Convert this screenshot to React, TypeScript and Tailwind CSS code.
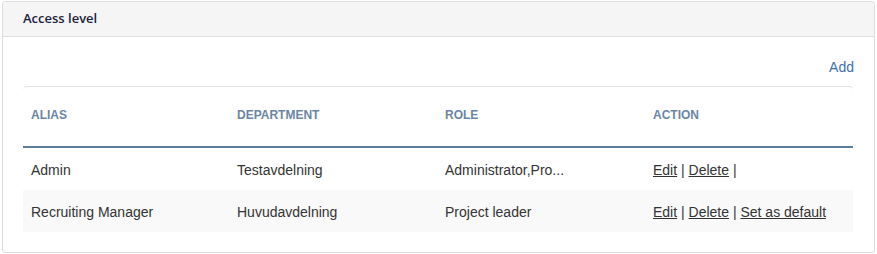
import React from "react";

const rows = [
  { alias: "Admin", dept: "Testavdelning", role: "Administrator,Pro...", def: false },
  { alias: "Recruiting Manager", dept: "Huvudavdelning", role: "Project leader", def: true },
];

export default function App() {
  return (
    <div className="w-[877px] h-[254px] bg-white pt-[1px] px-[2px] font-['Liberation_Sans',Arial,sans-serif]">
      <div className="border border-[#dddddd] rounded-[3px] h-[252px] overflow-hidden">
        <div className="h-[35px] bg-[#f5f5f5] border-b border-[#dddddd] px-[20px] flex items-center">
          <h3 className="text-[13px] font-['Open_Sans',sans-serif] text-[#1c1c3c] font-semibold">Access level</h3>
        </div>
        <div className="px-[20px] pt-[21px]">
          <div className="flex justify-end h-[28px]">
            <a className="text-[14px] text-[#3d6fa8] leading-[18px]">Add</a>
          </div>
          <table className="w-[830px] border-t border-[#e2e2e2] rounded-t-[4px] border-separate border-spacing-0 table-fixed">
            <colgroup>
              <col className="w-[206px]" />
              <col className="w-[208px]" />
              <col className="w-[208px]" />
              <col className="w-[208px]" />
            </colgroup>
            <thead>
              <tr className="h-[61px]">
                {["ALIAS", "DEPARTMENT", "ROLE", "ACTION"].map((h) => (
                  <th
                    key={h}
                    className="text-left px-[8px] text-[12px] font-bold text-[#6a86a4] border-b-2 border-[#5b7d9a] align-middle pb-[3px]"
                  >
                    {h}
                  </th>
                ))}
              </tr>
            </thead>
            <tbody>
              {rows.map((r, i) => (
                <tr key={r.alias} className={i % 2 ? "h-[42px] bg-[#f9f9f9]" : "h-[42px]"}>
                  <td className="px-[8px] text-[14px] text-[#333] pt-[2px]">{r.alias}</td>
                  <td className="px-[8px] text-[14px] text-[#333] pt-[2px]">{r.dept}</td>
                  <td className="px-[8px] text-[14px] text-[#333] pt-[2px]">{r.role}</td>
                  <td className="px-[8px] text-[14px] text-[#333] pt-[2px]">
                    <a className="underline">Edit</a> | <a className="underline">Delete</a> |
                    {r.def && (
                      <>
                        {" "}
                        <a className="underline">Set as default</a>
                      </>
                    )}
                  </td>
                </tr>
              ))}
            </tbody>
          </table>
        </div>
      </div>
    </div>
  );
}
